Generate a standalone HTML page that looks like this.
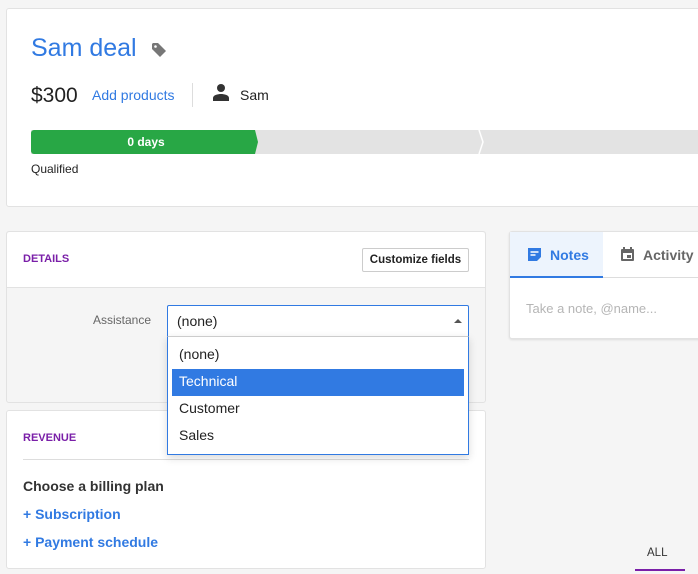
<!DOCTYPE html>
<html><head><style>
*{box-sizing:border-box;margin:0;padding:0}
body{width:698px;height:574px;overflow:hidden;background:#f5f5f5;font-family:"Liberation Sans",sans-serif;color:#222;position:relative}
.a{position:absolute}
.card{position:absolute;background:#fff;border:1px solid #e2e2e2;border-radius:3px}
</style></head><body>
<div class="card" style="left:6px;top:8px;width:700px;height:199px"></div>
<div class="a" style="left:31px;top:34px;font-size:25px;color:#317ae2">Sam deal</div>
<svg class="a" style="left:151px;top:42px" width="16" height="16" viewBox="0 0 16 16"><path d="M1 2v5l8 8 6-6-8-8H2z" fill="#777"/><circle cx="4.5" cy="4.5" r="1.3" fill="#fff"/></svg>
<div class="a" style="left:31px;top:84px;font-size:21px;color:#222">$300</div>
<div class="a" style="left:92px;top:87px;font-size:14px;color:#317ae2">Add products</div>
<div class="a" style="left:192px;top:83px;width:1px;height:24px;background:#ddd"></div>
<svg class="a" style="left:212px;top:83px" width="18" height="18" viewBox="0 0 18 18"><circle cx="9" cy="5" r="4" fill="#333"/><path d="M1 18v-3c0-3 5-4 8-4s8 1 8 4v3z" fill="#333"/></svg>
<div class="a" style="left:240px;top:87px;font-size:14px">Sam</div>
<div class="a" style="left:31px;top:130px;width:667px;height:24px;background:#e3e3e3"></div>
<div class="a" style="left:31px;top:130px;width:227px;height:24px;background:#28a745;border-radius:3px 0 0 3px;clip-path:polygon(0 0,224px 0,100% 50%,224px 100%,0 100%)"></div>
<div class="a" style="left:31px;top:135px;width:230px;text-align:center;color:#fff;font-size:12px;font-weight:bold">0 days</div>
<svg class="a" style="left:478px;top:130px" width="8" height="24"><path d="M1 0 L5 12 L1 24" stroke="#fff" stroke-width="1.5" fill="none"/></svg>
<div class="a" style="left:31px;top:162px;font-size:12px">Qualified</div>

<div class="card" style="left:6px;top:231px;width:480px;height:172px;background:#f5f5f5"></div>
<div class="a" style="left:7px;top:232px;width:478px;height:56px;background:#fff;border-bottom:1px solid #e2e2e2;border-radius:3px 3px 0 0"></div>
<div class="a" style="left:23px;top:253px;font-size:11px;font-weight:bold;color:#7a1fa8">DETAILS</div>
<div class="a" style="left:362px;top:248px;width:107px;height:24px;border:1px solid #ccc;border-radius:2px;background:#fff;font-size:11.5px;font-weight:bold;text-align:center;line-height:22px;color:#222">Customize fields</div>
<div class="a" style="left:93px;top:313px;font-size:12px;color:#666">Assistance</div>

<div class="card" style="left:6px;top:410px;width:480px;height:159px"></div>
<div class="a" style="left:23px;top:432px;font-size:11px;font-weight:bold;color:#7a1fa8">REVENUE</div>
<div class="a" style="left:23px;top:459px;width:446px;height:1px;background:#ddd"></div>
<div class="a" style="left:23px;top:478px;font-size:14px;font-weight:bold;color:#333">Choose a billing plan</div>
<div class="a" style="left:23px;top:506px;font-size:14px;font-weight:bold;color:#317ae2">+ Subscription</div>
<div class="a" style="left:23px;top:534px;font-size:14px;font-weight:bold;color:#317ae2">+ Payment schedule</div>

<div class="a" style="left:167px;top:305px;width:302px;height:32px;border:1px solid #317ae2;border-radius:2px 2px 0 0;background:#fff;font-size:14px;padding:7px 0 0 9px">(none)</div>
<svg class="a" style="left:454px;top:318px" width="8" height="5"><path d="M0 5L4 1 8 5z" fill="#555"/></svg>
<div class="a" style="left:167px;top:336px;width:302px;height:119px;border:1px solid #317ae2;border-top:1px solid #ccc;background:#fff;box-shadow:0 3px 8px rgba(0,0,0,.15);font-size:14px">
<div style="position:absolute;left:11px;top:9px">(none)</div>
<div style="position:absolute;left:4px;top:32px;width:292px;height:27px;background:#317ae2"></div>
<div style="position:absolute;left:11px;top:36px;color:#fff">Technical</div>
<div style="position:absolute;left:11px;top:63px">Customer</div>
<div style="position:absolute;left:11px;top:90px">Sales</div>
</div>

<div class="card" style="left:509px;top:231px;width:200px;height:108px;box-shadow:0 1px 2px rgba(0,0,0,.1)"></div>
<div class="a" style="left:510px;top:232px;width:93px;height:46px;background:#edf4fd;border-bottom:2px solid #317ae2"></div>
<div class="a" style="left:603px;top:277px;width:95px;height:1px;background:#ddd"></div>
<svg class="a" style="left:527px;top:247px" width="15" height="15" viewBox="0 0 15 15"><path d="M1 1h13v9l-4 4H1z" fill="#317ae2"/><path d="M3.5 5h8M3.5 8h5" stroke="#fff" stroke-width="1.5"/></svg>
<div class="a" style="left:550px;top:247px;font-size:14px;font-weight:bold;color:#317ae2">Notes</div>
<svg class="a" style="left:620px;top:246px" width="15" height="16" viewBox="0 0 15 16"><rect x="1" y="3" width="13" height="12" rx="1" fill="#666"/><rect x="3" y="7" width="9" height="6" fill="#fff"/><rect x="7" y="9" width="4" height="3" fill="#666"/><rect x="3" y="1" width="2" height="3" fill="#666"/><rect x="10" y="1" width="2" height="3" fill="#666"/></svg>
<div class="a" style="left:643px;top:247px;font-size:14px;font-weight:bold;color:#666">Activity</div>
<div class="a" style="left:526px;top:301px;font-size:13px;color:#b5b5b5">Take a note, @name...</div>

<div class="a" style="left:647px;top:547px;font-size:11.5px;color:#333">ALL</div>
<div class="a" style="left:635px;top:569px;width:50px;height:2px;background:#7a1fa8"></div>
</body></html>
